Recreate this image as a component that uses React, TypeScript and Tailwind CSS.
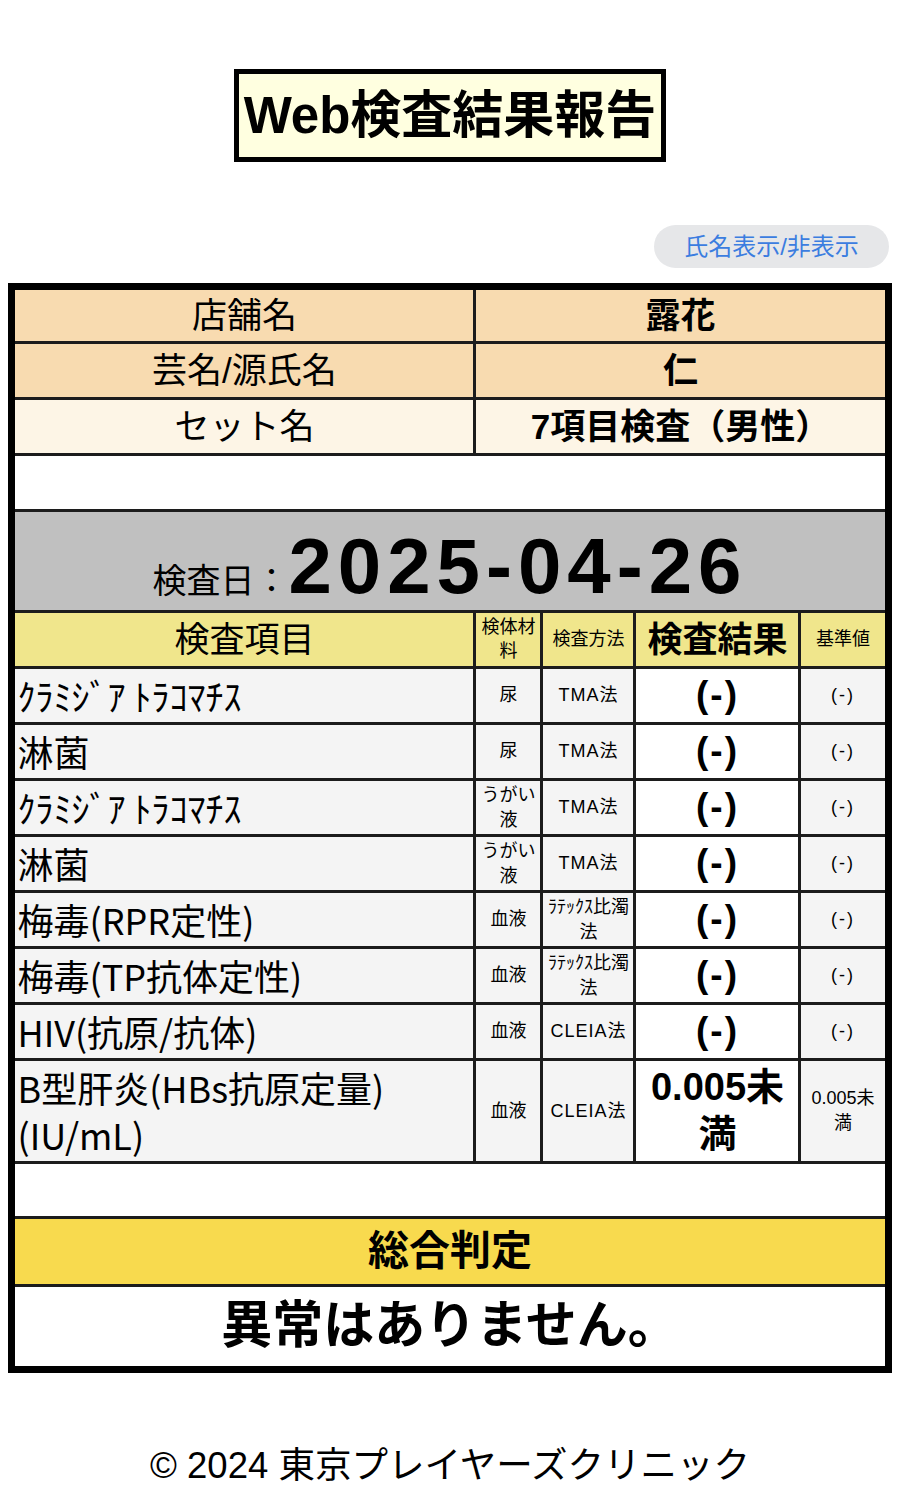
type Item = {
  name: string;
  sample: string;
  method: string;
  result: string;
  reference: string;
};

const items: Item[] = [
  { name: "ｸﾗﾐｼﾞｱ ﾄﾗｺﾏﾁｽ", sample: "尿", method: "TMA法", result: "(-)", reference: "(-)" },
  { name: "淋菌", sample: "尿", method: "TMA法", result: "(-)", reference: "(-)" },
  { name: "ｸﾗﾐｼﾞｱ ﾄﾗｺﾏﾁｽ", sample: "うがい液", method: "TMA法", result: "(-)", reference: "(-)" },
  { name: "淋菌", sample: "うがい液", method: "TMA法", result: "(-)", reference: "(-)" },
  { name: "梅毒(RPR定性)", sample: "血液", method: "ﾗﾃｯｸｽ比濁法", result: "(-)", reference: "(-)" },
  { name: "梅毒(TP抗体定性)", sample: "血液", method: "ﾗﾃｯｸｽ比濁法", result: "(-)", reference: "(-)" },
  { name: "HIV(抗原/抗体)", sample: "血液", method: "CLEIA法", result: "(-)", reference: "(-)" },
];

const cell = "border-[3px] border-[#1c1c1c] p-0";
const itemName = "px-[2px] text-left text-[36px] font-['Noto_Sans_CJK_JP',sans-serif]";

export default function App() {
  return (
    <div className="min-h-[1511px] w-full bg-white font-['Liberation_Sans','Noto_Sans_CJK_JP',sans-serif] text-black">
      <div className="flex justify-center pt-[69px]">
        <h1 className="border-[5px] border-black bg-[#ffffe0] px-[5px] text-[51px] font-bold leading-[83px]">
          Web検査結果報告
        </h1>
      </div>

      <div className="mt-[63px] flex justify-end pr-[11px]">
        <button
          type="button"
          className="h-[43px] w-[235px] rounded-full bg-[#e6e7e9] text-[24px] text-[#3b7de0]"
        >
          氏名表示/非表示
        </button>
      </div>

      <table className="mx-auto mt-[15px] w-[882px] table-fixed border-collapse border-[7px] border-black text-center">
        <colgroup>
          <col className="w-[463px]" />
          <col className="w-[67px]" />
          <col className="w-[93px]" />
          <col className="w-[165px]" />
          <col className="w-[88px]" />
        </colgroup>
        <tbody>
          <tr className="h-[56px] bg-[#f8dbb0] text-[35px] leading-[1.3]">
            <td className={cell}>店舗名</td>
            <td className={`${cell} font-bold`} colSpan={4}>
              露花
            </td>
          </tr>
          <tr className="h-[56px] bg-[#f8dbb0] text-[35px] leading-[1.3]">
            <td className={cell}>芸名/源氏名</td>
            <td className={`${cell} font-bold`} colSpan={4}>
              仁
            </td>
          </tr>
          <tr className="h-[56px] bg-[#fdf5e6] text-[35px] leading-[1.3]">
            <td className={cell}>セット名</td>
            <td className={`${cell} font-bold`} colSpan={4}>
              7項目検査（男性）
            </td>
          </tr>
          <tr className="h-[56px] bg-white">
            <td className={cell} colSpan={5}></td>
          </tr>
          <tr className="h-[101px] bg-[#c0c0c0]">
            <td className={`${cell} pt-[10px] leading-none`} colSpan={5}>
              <span className="text-[34px]">検査日：</span>
              <span className="text-[78px] font-bold tracking-[6px]">2025-04-26</span>
            </td>
          </tr>
          <tr className="h-[56px] bg-[#f0e68c]">
            <td className={`${cell} text-[35px] leading-[1.3]`}>検査項目</td>
            <td className={`${cell} px-[2px] text-[18px] leading-[1.3]`}>検体材料</td>
            <td className={`${cell} px-[2px] text-[18px] leading-[1.3]`}>検査方法</td>
            <td className={`${cell} text-[35px] font-bold leading-[1.3]`}>検査結果</td>
            <td className={`${cell} text-[18px] leading-[1.3]`}>基準値</td>
          </tr>
          {items.map((item, i) => (
            <tr key={i} className="h-[56px] bg-[#f4f4f4]">
              <td className={`${cell} ${itemName} leading-[1.3]`}>{item.name}</td>
              <td className={`${cell} px-[2px] text-[18px] leading-[1.35]`}>{item.sample}</td>
              <td
                className={
                  item.method.startsWith("ﾗ")
                    ? `${cell} px-[2px] text-[18px] leading-[1.35]`
                    : `${cell} px-[2px] text-[18px] leading-[1.35] tracking-[1px]`
                }
              >
                {item.method}
              </td>
              <td className={`${cell} bg-white text-[37px] font-bold leading-[1.2] tracking-[2px]`}>
                {item.result}
              </td>
              <td className={`${cell} text-[18px] leading-[1.3] tracking-[2px]`}>{item.reference}</td>
            </tr>
          ))}
          <tr className="h-[103px] bg-[#f4f4f4]">
            <td className={`${cell} ${itemName} leading-[1.3]`}>B型肝炎(HBs抗原定量)(IU/mL)</td>
            <td className={`${cell} text-[18px]`}>血液</td>
            <td className={`${cell} text-[18px] tracking-[1px]`}>CLEIA法</td>
            <td className={`${cell} bg-white px-[4px] text-[38px] font-bold leading-[1.25]`}>
              0.005未満
            </td>
            <td className={`${cell} px-[2px] text-[18px] leading-[1.4]`}>0.005未満</td>
          </tr>
          <tr className="h-[55px] bg-white">
            <td className={cell} colSpan={5}></td>
          </tr>
          <tr className="h-[68px] bg-[#f8da4e]">
            <td className={`${cell} text-[41px] font-bold leading-[1.3]`} colSpan={5}>
              総合判定
            </td>
          </tr>
          <tr className="h-[84px] bg-white">
            <td className={`${cell} text-[51px] font-bold leading-[1.3]`} colSpan={5}>
              異常はありません。
            </td>
          </tr>
        </tbody>
      </table>

      <p className="mt-[66px] text-center text-[36.5px] leading-[54px]">
        © 2024 東京プレイヤーズクリニック
      </p>
    </div>
  );
}
